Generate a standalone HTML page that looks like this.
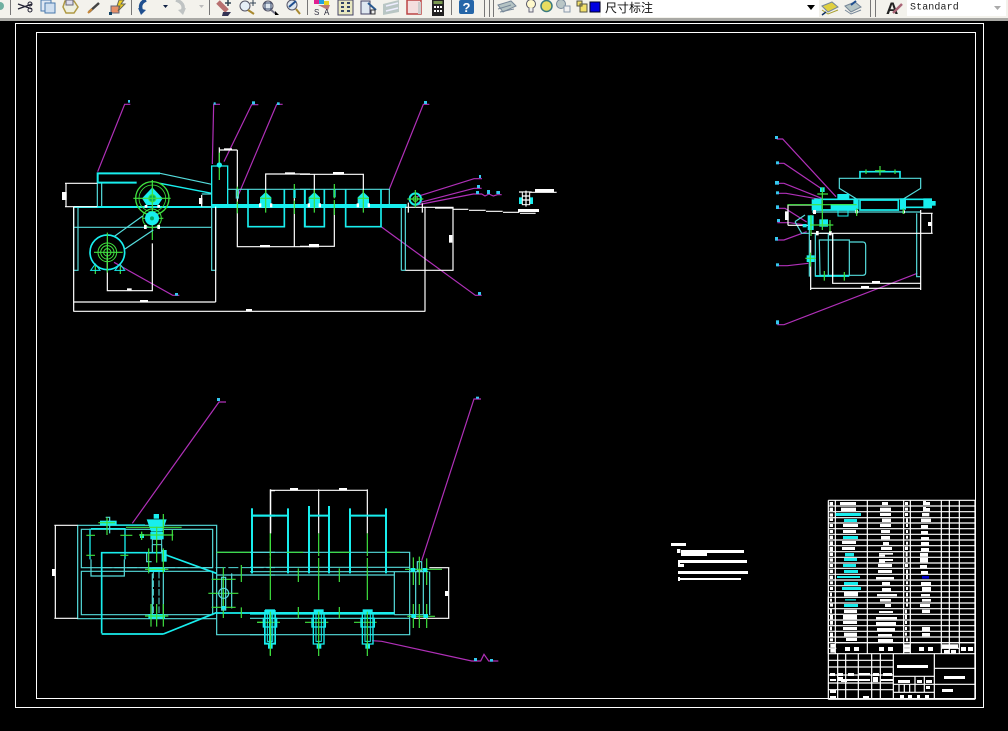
<!DOCTYPE html>
<html><head><meta charset="utf-8"><style>
html,body{margin:0;padding:0;background:#000;width:1008px;height:731px;overflow:hidden}
svg{position:absolute;left:0;top:0}
.c{stroke:#18eeee;stroke-width:6;fill:none}
.d{stroke:#18eeee;stroke-width:9;fill:none}
.t{stroke:#55dcdc;stroke-width:3.600;fill:none}
.g{stroke:#3fe03f;stroke-width:3.600;fill:none}
.w{stroke:#fff;stroke-width:3.600;fill:none}
.m{stroke:#b030b8;stroke-width:3.600;fill:none}
.f{fill:#fff}.k{fill:#18eeee}.b{fill:#35c8f0}
text{font-family:"Liberation Sans","Noto Sans CJK SC",sans-serif}
</style></head><body>
<svg width="1008" height="731" viewBox="0 0 1008 731" xmlns="http://www.w3.org/2000/svg">
<rect width="1008" height="731" fill="#000"/>
<!-- toolbar -->
<rect width="1008" height="19" fill="#f3f2ec"/>
<rect y="18" width="1008" height="3" fill="#a9a9a5"/>
<g stroke="#777" stroke-width="1"><path d="M10.500 0V15M131.500 0V15M209.500 0V15M307.500 0V15M451.500 0V15M484.500 0V17M489.500 0V17M493.500 0V17M870.500 0V17M875.500 0V17"/></g>
<circle cx="0" cy="6" r="4" fill="#6fb0a0"/>
<g fill="none">
<path d="M18 4L32 9M18 9L32 4" stroke="#223" stroke-width="1.200"/><circle cx="30" cy="4" r="2" stroke="#223"/><circle cx="30" cy="10" r="2" stroke="#223"/>
<rect x="41" y="0" width="10" height="11" fill="#dfe8f4" stroke="#4a79ad"/><rect x="45" y="3" width="10" height="10" fill="#cfdff0" stroke="#4a79ad"/>
<path d="M65 1H74L78 7L74 13H66L63 7Z" fill="#eef0e0" stroke="#b09a45" stroke-width="1.500"/><rect x="66" y="0" width="7" height="5" fill="#dde" stroke="#667"/>
<path d="M89 12L99 3" stroke="#444" stroke-width="2.500"/><path d="M88 13L92 9" stroke="#c98a3a" stroke-width="2"/>
<rect x="111" y="6" width="8" height="7" fill="#e89068" stroke="#667"/><path d="M119 0L124 0L121 4H125L118 11L120 6H117Z" fill="#f0d020" stroke="#665"/><rect x="109" y="12" width="3" height="3" fill="#146"/>
<path d="M146 0C141 2 139 6 142 12" stroke="#1f4f8f" stroke-width="3.500"/><path d="M138 8L146 10L141 15Z" fill="#1f4f8f"/>
<path d="M163 5H168L165.500 8Z" fill="#124"/>
<path d="M176 0C182 2 185 6 182 12" stroke="#bfc3c3" stroke-width="3.500"/><path d="M186 8L178 10L183 15Z" fill="#bfc3c3"/>
<path d="M199 5H204L201.500 8Z" fill="#bbb"/>
<path d="M218 2L227 11" stroke="#b87070" stroke-width="5"/><path d="M223 12L231 12L228 16H222Z" fill="#335"/><path d="M228 0L228 6M225 3H231" stroke="#345" stroke-width="1.500"/>
<circle cx="245" cy="6" r="5" fill="#e6eef6" stroke="#556"/><path d="M248 10L254 14" stroke="#a98a30" stroke-width="2"/><path d="M250 3H256M253 0V6" stroke="#345"/>
<circle cx="268" cy="6" r="5" fill="#dde6ee" stroke="#556"/><rect x="265" y="3" width="6" height="6" stroke="#346"/><path d="M271 10L276 14" stroke="#778" stroke-width="2"/><path d="M275 11V15H279Z" fill="#000"/>
<circle cx="292" cy="5" r="5" fill="#dde6ee" stroke="#556"/><path d="M296 9L300 14" stroke="#a98a30" stroke-width="2"/><path d="M289 7L296 1" stroke="#1f4f8f" stroke-width="2"/>
</g>
<g>
<rect x="314" y="0" width="5" height="4" fill="#e02090"/><rect x="319" y="0" width="5" height="4" fill="#20a0e0"/><rect x="324" y="1" width="5" height="4" fill="#e8d020"/>
<path d="M318 5L330 5L328 10Z" fill="#b77"/><text x="314" y="15" font-size="8" fill="#334">S</text><text x="324" y="15" font-size="8" fill="#223">A</text>
<rect x="338" y="0" width="15" height="15" fill="#e8e8c0" stroke="#446"/><g fill="#346"><rect x="341" y="2" width="3" height="2"/><rect x="347" y="2" width="3" height="2"/><rect x="341" y="6" width="3" height="2"/><rect x="347" y="6" width="3" height="2"/><rect x="341" y="10" width="3" height="2"/><rect x="347" y="10" width="3" height="2"/></g>
<rect x="361" y="1" width="9" height="13" fill="#dfe8f0" stroke="#446"/><path d="M368 3L376 10" stroke="#2a5a90" stroke-width="2"/><rect x="371" y="10" width="4" height="4" fill="#eee" stroke="#333"/>
<path d="M383 4L399 0V12L383 15Z" fill="#b9c6c4"/><path d="M386 6L398 3M386 11L398 8" stroke="#eef" stroke-width="1.500"/>
<rect x="407" y="0" width="14" height="14" fill="#f4dede" stroke="#b44" stroke-width="1.500"/><rect x="418" y="2" width="3" height="12" fill="#ccc"/>
<rect x="432" y="0" width="12" height="16" fill="#222"/><rect x="433.500" y="1" width="9" height="3" fill="#7a9a50"/><g fill="#fff"><rect x="434" y="6" width="2" height="2"/><rect x="437" y="6" width="2" height="2"/><rect x="440" y="6" width="2" height="2"/><rect x="434" y="10" width="2" height="2"/><rect x="437" y="10" width="2" height="2"/><rect x="440" y="10" width="2" height="2"/></g>
<rect x="459" y="0" width="15" height="14" rx="2" fill="#2566a8"/><text x="462.500" y="12" font-size="13" font-weight="bold" fill="#fff">?</text>
</g>
<path d="M498 5L511 1L516 6L503 12Z" fill="#b5c4c4" stroke="#789"/><path d="M498 9L511 5M500 12L514 9" stroke="#789"/>
<circle cx="531" cy="4" r="4.500" fill="#fff9cc" stroke="#556"/><path d="M529 8V12H533V8" fill="#eee" stroke="#667"/>
<circle cx="546.500" cy="6" r="5.500" fill="#e8dc60" stroke="#3a7a80" stroke-width="1.500"/>
<circle cx="561" cy="4" r="4.500" fill="#b9c6c6" stroke="#789"/><rect x="564" y="6" width="6" height="6" fill="#f0f0f0" stroke="#89a"/>
<path d="M577 1h5v5h-5zM580 4h7v8h-7z" fill="#f2e06a" stroke="#554"/>
<rect x="590" y="2" width="10" height="10" fill="#0000e0" stroke="#002"/>
<rect x="601" y="0" width="218" height="17" fill="#fff"/>
<text x="605" y="12" font-size="12" fill="#111">尺寸标注</text>
<path d="M807 5H815L811 10Z" fill="#000"/>
<path d="M822 6L832 2L838 7L828 12Z" fill="#e0d040" stroke="#789"/><path d="M822 10L828 14L838 10" fill="none" stroke="#a9a030"/><path d="M822 15L826 12" stroke="#136" stroke-width="1.500"/>
<path d="M845 6L855 2L861 7L851 12Z" fill="#b5c4c4" stroke="#789"/><path d="M845 10L851 14L861 10" fill="none" stroke="#789"/><path d="M851 5L856 1" stroke="#1f4f8f" stroke-width="2"/>
<text x="886" y="14" font-size="17" font-weight="bold" fill="#222">A</text><path d="M893 13L902 4" stroke="#a67" stroke-width="2.500"/>
<rect x="907" y="0" width="99" height="16" fill="#fff"/>
<text x="910" y="9.500" font-size="10" letter-spacing=".1" style='font-family:"Liberation Mono",monospace' fill="#222">Standard</text>
<path d="M994 6H1001L997.500 10Z" fill="#aaa"/>
<!-- drawing frames -->
<rect x="15.500" y="23.500" width="968" height="684" class="w" style="stroke-width:1"/>
<rect x="36.500" y="32.500" width="939" height="666" class="w" style="stroke-width:1"/>

<!-- view A -->
<g transform="translate(50,90) scale(.33333)">
<path class="m" d="M241 43H224L143 245M510 43H491L487 222M625 44H605L522 215M698 43H680L563 320M388 616H368L192 517"/>
<rect x="234" y="30" width="6" height="8" class="b"/><rect x="491" y="37" width="6" height="7" class="b"/><rect x="606" y="34" width="9" height="9" class="b"/><rect x="681" y="37" width="8" height="8" class="b"/><rect x="375" y="609" width="9" height="8" class="b"/>
<path class="t" d="M71 350V541H84V350M485 350V541H497V350M71 412H485M142 280V350M155 280V350"/>
<path class="c" d="M143 280V250H330M143 278H260"/>
<path class="t" d="M330 250L485 283"/>
<path class="c" d="M330 280L485 310" style="stroke-width:4"/>
<path class="d" style="stroke-width:6" d="M71 351H485"/>
<path class="d" style="stroke-width:12" d="M485 348H780"/>
<path class="c" d="M485 348V228H533V345" style="stroke-width:4"/>
<path class="t" d="M533 298H780M455 312H485M455 350H485"/>
<path class="w" d="M45 280H142M45 350H142M48 280V350M71 350V665M71 636H497M71 664H780M497 350V636M172 487V602H307V460M508 172V228M508 180H562M562 180V470H780M733 300V470M647 310V252H780M455 315V350"/>
<rect x="36" y="306" width="14" height="24" class="f"/><rect x="231" y="595" width="14" height="6" class="f"/><rect x="270" y="630" width="24" height="7" class="f"/><rect x="588" y="657" width="18" height="7" class="f"/><rect x="522" y="175" width="24" height="6" class="f"/><rect x="630" y="465" width="30" height="7" class="f"/><rect x="705" y="247" width="30" height="6" class="f"/><rect x="447" y="324" width="10" height="18" class="f"/>
<path class="g" d="M508 188V270M562 290V320M562 335V370M733 282V325M733 332V372"/>
<path class="c" d="M594 298V410H703V298" style="stroke-width:5"/><path class="c" d="M765 298V410H780" style="stroke-width:5"/>
<circle cx="508" cy="225" r="8" class="k"/><rect x="730" y="300" width="7" height="24" class="k"/><rect x="559" y="300" width="6" height="24" class="t"/>
<path class="k" d="M647 306L664 322V345H630V322Z"/><rect x="627" y="340" width="40" height="12" class="f"/><rect x="634" y="338" width="26" height="14" class="k"/><path class="g" d="M647 300V368M630 325H664" />
<circle cx="307" cy="325" r="50" class="g" style="stroke-width:4"/><circle cx="307" cy="325" r="40" class="g" style="stroke-width:2.500"/>
<path class="k" d="M307 292L338 325L325 345H289L276 325Z"/><circle cx="307" cy="325" r="11" fill="#0a6" stroke="#3fe03f" stroke-width="3"/>
<path class="g" d="M307 270V450M250 325H362M278 385H340"/>
<circle cx="306" cy="385" r="28" class="g" style="stroke-width:3"/><circle cx="306" cy="385" r="21" class="k"/><circle cx="306" cy="385" r="6" fill="#0a6" />
<rect x="282" y="405" width="8" height="12" class="f"/><rect x="322" y="405" width="8" height="12" class="f"/><rect x="284" y="345" width="8" height="8" class="f"/><rect x="322" y="345" width="8" height="8" class="f"/>
<path class="t" d="M192 440L278 378M225 477L310 420"/>
<circle cx="172" cy="487" r="52" class="c" style="stroke-width:5"/><circle cx="172" cy="487" r="28" class="g" style="stroke-width:3"/><circle cx="172" cy="487" r="20" class="g" style="stroke-width:3"/><circle cx="172" cy="487" r="11" class="g" style="stroke-width:3"/>
<path class="g" d="M172 428V548M132 487H218M136 528V552M211 528V552"/>
<path class="c" d="M122 541H150L136 522ZM195 541H224L210 522Z" style="stroke-width:3"/>
</g>

<!-- view B -->
<g transform="translate(300,90) scale(.33333)">
<path class="m" d="M388 43H370L268 297M546 266H522L350 320M545 295H522L350 340M605 314H592L580 318L567 312L555 318L545 312H520L350 345M545 616H526L243 410"/>
<rect x="372" y="33" width="9" height="9" class="b"/><rect x="537" y="255" width="6" height="9" class="b"/><rect x="531" y="285" width="9" height="9" class="b"/><rect x="528" y="303" width="9" height="9" class="b"/><rect x="561" y="300" width="9" height="12" class="b"/><rect x="589" y="303" width="11" height="9" class="b"/><rect x="534" y="606" width="9" height="9" class="b"/>
<path class="t" d="M0 298H268V345M304 350V541M316 350V541M304 541H316"/>
<path class="d" style="stroke-width:12" d="M0 348H320"/>
<path class="c" d="M14 298V410H73V298M137 298V410H243V298" style="stroke-width:5"/>
<path class="w" d="M0 253H190V310M43 252V310M0 469H103V355M316 541H459V352H316M375 350V665M0 664H375M325 338V368M367 340V368M460 358H505M507 361H557M558 364H608M609 367H658M660 370H707M657 306H695M690 307H770"/>
<rect x="99" y="246" width="33" height="7" class="f"/><rect x="27" y="462" width="30" height="10" class="f"/><rect x="405" y="351" width="55" height="5" class="f"/><rect x="447" y="435" width="10" height="23" class="f"/><rect x="705" y="297" width="57" height="9" class="f"/><rect x="654" y="357" width="63" height="9" class="f"/>
<rect x="100" y="298" width="7" height="24" class="k"/><path class="g" d="M103 282V325M103 330V375"/>
<g><path class="k" d="M43 306L60 322V345H26V322Z"/><rect x="23" y="340" width="40" height="12" class="f"/><rect x="30" y="338" width="26" height="14" class="k"/><path class="g" d="M43 300V368M26 325H60"/></g>
<path class="k" d="M190 306L207 322V345H173V322Z"/><rect x="170" y="340" width="40" height="12" class="f"/><rect x="177" y="338" width="26" height="14" class="k"/><path class="g" d="M190 300V368M173 325H207"/>
<circle cx="346" cy="327" r="17" class="c" style="stroke-width:6"/><path class="g" d="M346 300V352M322 327H370"/><circle cx="346" cy="327" r="7" class="g"/>
<rect x="657" y="322" width="42" height="20" class="k"/><rect x="667" y="306" width="22" height="38" fill="#000" stroke="#fff" stroke-width="3"/><path class="w" d="M678 302V350M667 318H689M667 330H689"/>
</g>

<!-- view C -->
<g transform="translate(760,130) scale(.33333)">
<path class="m" d="M50 27H68L228 200M52 100H72L190 180M50 160H72L185 205M52 190H78L180 208M52 235H75L140 276M52 278H90L135 285M50 330H72L140 305M52 407H82L145 400M52 584H72L472 430"/>
<g class="b"><rect x="45" y="18" width="9" height="9"/><rect x="48" y="94" width="9" height="9"/><rect x="45" y="153" width="12" height="11"/><rect x="48" y="184" width="9" height="9"/><rect x="48" y="226" width="9" height="11"/><rect x="51" y="267" width="9" height="9"/><rect x="45" y="321" width="9" height="11"/><rect x="48" y="400" width="9" height="9"/><rect x="48" y="571" width="9" height="12"/></g>
<path class="t" d="M238 145H482V175L430 207H290L238 175ZM156 246H482M148 270V440M166 310V440M218 310V440M178 330H268V436H180ZM268 336H308Q317 336 317 346V428Q317 436 308 436H268M470 250V440H482M105 275L135 255M105 275L125 310H150"/>
<path class="c" d="M300 145V125H420V145" style="stroke-width:5"/>
<path class="c" d="M165 208H290V240H165ZM300 210H415V240H300ZM420 208H500M420 232H500" style="stroke-width:5"/>
<path class="t" d="M180 310H205V438H180"/>
<path class="c" d="M166 438H268" style="stroke-width:5"/>
<path class="w" d="M84 225H165M84 286H150M84 225V286M218 310V460H482M152 310H518M515 250V310M482 250H518M482 240V480M152 330V480M152 475H482"/>
<rect x="75" y="244" width="11" height="26" class="f"/><rect x="504" y="276" width="10" height="12" class="f"/><rect x="336" y="453" width="24" height="7" class="f"/><rect x="303" y="468" width="24" height="6" class="f"/>
<rect x="180" y="172" width="14" height="14" class="k"/><rect x="155" y="208" width="30" height="34" class="k"/><rect x="232" y="192" width="36" height="18" class="k"/><rect x="212" y="222" width="74" height="18" class="k"/><rect x="280" y="208" width="16" height="30" class="k"/>
<rect x="143" y="256" width="18" height="44" class="k"/><rect x="178" y="268" width="26" height="22" class="k"/><rect x="128" y="282" width="12" height="10" class="k"/><rect x="490" y="205" width="26" height="30" class="k"/><rect x="515" y="213" width="12" height="14" class="k"/><rect x="420" y="205" width="18" height="34" class="k"/><rect x="140" y="376" width="24" height="20" class="k"/><rect x="234" y="240" width="30" height="18" fill="none" stroke="#18eeee" stroke-width="3"/>
<rect x="168" y="303" width="8" height="13" class="f"/><rect x="207" y="303" width="8" height="13" class="f"/><rect x="159" y="240" width="9" height="12" class="f"/><rect x="286" y="240" width="8" height="10" class="f"/><rect x="428" y="241" width="7" height="9" class="f"/>
<path class="g" d="M187 172V300M172 192H204M82 224H290M150 285H220M360 108V136M318 118V132M405 118V132M345 122H376M290 235V258M430 235V252M193 423V452M253 426V452M151 368V410M136 385H168M153 255V318M210 270V305"/>
</g>

<!-- view D (leader tops above the crop) -->
<g transform="translate(45,480) scale(.33333)">
<path class="m" d="M543 -234H522L262 130"/>
<rect x="516" y="-246" width="9" height="9" class="b"/>
<path class="t" d="M98 136H515V416H98ZM109 148H503V263H109ZM109 274H503V404H109ZM515 217H690M515 285H690M515 275V464H690M503 285V404M560 280V385"/>
<path class="c" d="M170 460V218H355M170 462H355M355 462L514 398M355 222L514 280M514 399H690" style="stroke-width:5"/>
<path class="c" d="M138 146H240V238M135 146V238M175 135H300" style="stroke-width:4"/>
<path class="t" d="M138 238V288H238V238M182 112H194V160"/>
<path stroke="#55dcdc" stroke-width="3" stroke-dasharray="30 8" d="M170 263H690" fill="none"/><path stroke="#55dcdc" stroke-width="3" stroke-dasharray="20 6" d="M325 275V400M342 275V400" fill="none"/>
<path class="t" d="M322 280V405H355V280M305 220V245H320"/>
<rect x="165" y="122" width="50" height="14" class="k"/><path class="k" d="M305 118H365L352 155H318Z"/><rect x="326" y="102" width="16" height="14" class="k"/><rect x="285" y="162" width="12" height="12" class="k"/><rect x="316" y="156" width="40" height="22" class="k"/><rect x="322" y="178" width="28" height="16" fill="none" stroke="#55dcdc" stroke-width="3"/><rect x="350" y="210" width="15" height="35" class="k"/><path class="t" d="M322 195V218M350 195V218"/>
<rect x="310" y="262" width="50" height="14" class="k"/><rect x="310" y="402" width="50" height="14" class="k"/>
<path class="w" d="M28 136H98M28 415H98M31 136V415"/><rect x="21" y="267" width="10" height="21" class="f"/>
<path class="g" d="M160 128H210M186 112V165M124 166H150M226 166H262M124 226H150M226 226H250M243 142H410M282 165H385M290 155V180M335 140V248M355 102V160M382 150V182M311 205V280M355 205V280M300 268H370M318 372V440M335 372V440M355 372V440M300 408H370M500 298H572M490 340H580M535 262V414M500 382H572M589 255V306M589 382V414M636 427H660M676 160V240M515 217H620M676 490V525"/>
<circle cx="536" cy="340" r="15" class="t"/><path class="t" d="M530 292H542V390H530Z"/><rect x="531" y="378" width="10" height="10" class="k"/>
<path class="c" d="M621 85V280M621 107H690" style="stroke-width:6"/>
<path class="c" d="M660 392H690V490H660Z" style="stroke-width:4"/><rect x="672" y="395" width="8" height="110" class="k"/>
<path class="w" d="M677 28V160M677 32H690"/>
</g>

<!-- view E -->
<g transform="translate(250,480) scale(.33333)">
<path class="m" d="M693 -243H672L515 242M366 482L395 484L665 543H692L702 523L716 543H745"/>
<rect x="678" y="-250" width="9" height="6" class="b"/>
<rect x="672" y="534" width="9" height="9" class="b"/><rect x="720" y="537" width="9" height="8" class="b"/>
<path class="w" d="M61 28V160M61 31H352M206 28V160M352 28V160M538 263H598M490 415H598M596 263V415"/>
<rect x="120" y="24" width="24" height="7" class="f"/><rect x="267" y="24" width="24" height="7" class="f"/><rect x="585" y="333" width="10" height="15" class="f"/>
<path class="t" d="M0 217H479V464H0M0 262H479M0 275H535M0 285H433V404M0 415H479M433 275V404M433 404H530M502 245V272H515V245ZM497 275V405M520 275V405M539 275V405"/>
<path class="c" d="M6 85V280M3 107H114M114 85V280M177 78V280M177 107H237M237 78V280M300 85V280M300 107H408M408 85V280" style="stroke-width:6"/>
<path class="d" style="stroke-width:8" d="M0 400H433"/>
<path class="g" d="M61 160V228M61 234V360M206 160V228M206 234V360M352 160V228M352 234V360M110 217H160M240 217H300M410 217H450M145 265V306M268 265V306M145 381V415M268 381V415M465 268H576M508 230V315M490 232V315M530 235V315M472 409H555M490 372V444M508 372V444M530 372V444M22 427H90M165 427H235M312 427H380"/>
<rect x="482" y="264" width="14" height="12" class="k"/><rect x="518" y="264" width="14" height="12" class="k"/><rect x="484" y="402" width="14" height="12" class="k"/><rect x="520" y="402" width="14" height="12" class="k"/>
<g><rect x="45" y="388" width="30" height="14" class="k"/><path class="c" d="M44 402V492H76V402" style="stroke-width:4"/><path class="c" d="M52 402V484H68V402" style="stroke-width:3"/><rect x="40" y="415" width="40" height="26" fill="none" stroke="#18eeee" stroke-width="4"/><rect x="54" y="492" width="14" height="14" class="k"/></g>
<rect x="191" y="388" width="30" height="14" class="k"/><path class="c" d="M190 402V492H222V402" style="stroke-width:4"/><path class="c" d="M198 402V484H214V402" style="stroke-width:3"/><rect x="186" y="415" width="40" height="26" fill="none" stroke="#18eeee" stroke-width="4"/><rect x="200" y="492" width="14" height="14" class="k"/>
<rect x="338" y="388" width="30" height="14" class="k"/><path class="c" d="M337 402V492H369V402" style="stroke-width:4"/><path class="c" d="M345 402V484H361V402" style="stroke-width:3"/><rect x="333" y="415" width="40" height="26" fill="none" stroke="#18eeee" stroke-width="4"/><rect x="346" y="492" width="14" height="14" class="k"/>
<path class="g" d="M61 395V528M206 395V528M352 395V528"/>
</g>

<!-- notes -->
<g transform="translate(660,535) scale(.33333)" class="f">
<rect x="33" y="24" width="45" height="9"/><rect x="51" y="42" width="10" height="12"/><rect x="63" y="45" width="189" height="9"/><rect x="63" y="54" width="78" height="9"/><rect x="54" y="75" width="207" height="9"/><rect x="54" y="84" width="6" height="12"/><rect x="60" y="87" width="12" height="9"/><rect x="54" y="108" width="210" height="9"/><rect x="54" y="126" width="6" height="12"/><rect x="60" y="129" width="183" height="6"/>
</g>

<!-- parts table -->
<g transform="translate(825,495) scale(.33333)">
<path class="w" d="M10 16H450M10 33H450M10 50H450M10 68H450M10 84H450M10 101H450M10 118H450M10 135H450M10 152H450M10 170H450M10 187H450M10 204H450M10 220H450M10 238H450M10 255H450M10 272H450M10 290H450M10 307H450M10 324H450M10 341H450M10 358H450M10 375H450M10 392H450M10 409H450M10 426H450M10 443H450"/>
<path class="w" d="M10 16V476M31 16V476M127 16V476M236 16V476M256 16V476M349 16V476M373 16V476M403 16V476M450 16V613"/>
<g fill="#fff">
<rect x="45" y="21" width="48" height="9"/><rect x="171" y="21" width="18" height="9"/><rect x="294" y="18" width="9" height="12"/><rect x="303" y="21" width="12" height="9"/>
<rect x="48" y="38" width="45" height="10"/><rect x="165" y="38" width="33" height="10"/><rect x="294" y="36" width="9" height="12"/><rect x="303" y="39" width="12" height="9"/>
<rect x="165" y="54" width="33" height="9"/><rect x="291" y="54" width="22" height="10"/>
<rect x="171" y="71" width="27" height="10"/><rect x="288" y="71" width="30" height="10"/>
<rect x="54" y="87" width="45" height="9"/><rect x="165" y="87" width="33" height="9"/><rect x="288" y="90" width="21" height="10"/>
<rect x="54" y="105" width="39" height="9"/><rect x="168" y="105" width="27" height="9"/><rect x="288" y="108" width="21" height="10"/>
<rect x="168" y="123" width="27" height="10"/><rect x="288" y="126" width="24" height="8"/>
<rect x="51" y="138" width="42" height="9"/><rect x="174" y="141" width="18" height="9"/><rect x="288" y="141" width="24" height="10"/>
<rect x="51" y="156" width="39" height="9"/><rect x="168" y="156" width="33" height="9"/><rect x="288" y="159" width="24" height="10"/>
<rect x="162" y="174" width="42" height="5"/><rect x="162" y="179" width="18" height="6"/><rect x="285" y="174" width="24" height="11"/>
<rect x="162" y="192" width="42" height="6"/><rect x="162" y="198" width="18" height="5"/><rect x="285" y="189" width="24" height="13"/>
<rect x="159" y="207" width="42" height="9"/><rect x="285" y="210" width="21" height="10"/>
<rect x="159" y="225" width="42" height="9"/><rect x="288" y="228" width="21" height="9"/>
<rect x="153" y="246" width="54" height="7"/>
<rect x="171" y="261" width="24" height="9"/><rect x="288" y="261" width="30" height="11"/>
<rect x="171" y="279" width="27" height="10"/><rect x="291" y="276" width="27" height="13"/>
<rect x="57" y="291" width="42" height="13"/><rect x="156" y="297" width="60" height="7"/><rect x="288" y="297" width="27" height="7"/>
<rect x="165" y="312" width="33" height="8"/><rect x="291" y="312" width="27" height="8"/>
<rect x="180" y="327" width="18" height="9"/><rect x="285" y="327" width="30" height="9"/>
<rect x="57" y="344" width="39" height="10"/><rect x="162" y="348" width="42" height="6"/><rect x="291" y="344" width="24" height="10"/>
<rect x="54" y="360" width="42" height="13"/><rect x="153" y="366" width="63" height="7"/>
<rect x="54" y="378" width="42" height="9"/><rect x="153" y="381" width="60" height="10"/>
<rect x="54" y="396" width="42" height="9"/><rect x="156" y="399" width="54" height="9"/><rect x="291" y="396" width="24" height="12"/>
<rect x="57" y="413" width="39" height="11"/><rect x="159" y="417" width="42" height="7"/><rect x="291" y="414" width="24" height="10"/>
<rect x="63" y="429" width="33" height="9"/><rect x="159" y="432" width="45" height="9"/>
</g>
<g fill="#18eeee">
<rect x="32" y="54" width="76" height="9"/><rect x="57" y="72" width="39" height="9"/><rect x="54" y="123" width="45" height="9"/><rect x="60" y="174" width="27" height="10"/><rect x="57" y="189" width="39" height="9"/><rect x="54" y="207" width="39" height="9"/><rect x="57" y="225" width="42" height="9"/><rect x="36" y="243" width="69" height="6"/><rect x="57" y="261" width="42" height="9"/><rect x="51" y="276" width="57" height="9"/><rect x="60" y="312" width="33" height="5" opacity=".8"/><rect x="57" y="327" width="42" height="9"/>
</g>
<rect x="291" y="243" width="21" height="8" fill="#0000d0"/>
<g fill="#fff">
<rect x="14" y="21" width="10" height="10"/><rect x="240" y="21" width="9" height="9"/><rect x="14" y="38" width="10" height="10"/><rect x="240" y="38" width="9" height="9"/><rect x="14" y="55" width="10" height="10"/><rect x="240" y="54" width="9" height="9"/><rect x="14" y="70" width="10" height="8"/><rect x="243" y="70" width="6" height="12"/><rect x="14" y="87" width="10" height="9"/><rect x="243" y="87" width="6" height="9"/><rect x="14" y="105" width="10" height="9"/><rect x="243" y="105" width="6" height="9"/><rect x="14" y="122" width="10" height="10"/><rect x="243" y="122" width="6" height="9"/><rect x="14" y="139" width="10" height="11"/><rect x="243" y="140" width="6" height="9"/><rect x="14" y="156" width="10" height="12"/><rect x="240" y="155" width="9" height="10"/><rect x="14" y="173" width="10" height="10"/><rect x="242" y="171" width="6" height="13"/><rect x="14" y="190" width="10" height="10"/><rect x="242" y="189" width="6" height="12"/><rect x="14" y="207" width="10" height="9"/><rect x="240" y="207" width="9" height="9"/><rect x="14" y="224" width="10" height="10"/><rect x="243" y="224" width="6" height="12"/><rect x="14" y="242" width="10" height="10"/><rect x="243" y="240" width="6" height="12"/><rect x="15" y="259" width="9" height="9"/><rect x="243" y="259" width="6" height="9"/><rect x="15" y="276" width="9" height="9"/><rect x="243" y="276" width="6" height="9"/><rect x="15" y="293" width="6" height="11"/><rect x="243" y="293" width="6" height="11"/><rect x="15" y="311" width="6" height="9"/><rect x="243" y="311" width="6" height="9"/><rect x="15" y="326" width="9" height="9"/><rect x="243" y="326" width="6" height="9"/><rect x="15" y="342" width="6" height="13"/><rect x="240" y="344" width="6" height="11"/><rect x="15" y="360" width="9" height="13"/><rect x="240" y="360" width="6" height="12"/><rect x="15" y="378" width="9" height="11"/><rect x="240" y="378" width="6" height="9"/><rect x="15" y="395" width="6" height="11"/><rect x="240" y="396" width="6" height="9"/><rect x="15" y="413" width="9" height="12"/><rect x="240" y="413" width="6" height="9"/><rect x="15" y="430" width="9" height="9"/><rect x="243" y="430" width="6" height="9"/>
</g>
</g>

<!-- title block -->
<g transform="translate(825,595) scale(.33333)">
<path class="w" d="M10 143H450M10 176H450M10 160H34M236 160H256M349 160H403M10 313H450M10 5V313M450 5V313"/>
<path class="w" d="M38 176V313M62 176V313M100 176V313M140 176V313M166 176V313M205 176V313M328 176V313M10 196H205M10 216H205M10 240H205M10 264H205M10 284H205M205 244H328M205 268H450M205 292H328M329 220H450M222 268V292M238 268V292M254 268V292M270 244V292M298 244V292"/>
<g fill="#fff"><rect x="60" y="156" width="15" height="12"/><rect x="87" y="156" width="15" height="12"/><rect x="162" y="156" width="15" height="12"/><rect x="189" y="156" width="15" height="12"/><rect x="282" y="156" width="15" height="12"/><rect x="309" y="156" width="15" height="12"/><rect x="351" y="148" width="48" height="12"/><rect x="357" y="165" width="15" height="10"/><rect x="378" y="165" width="15" height="10"/><rect x="408" y="156" width="15" height="12"/><rect x="429" y="156" width="15" height="12"/><rect x="16" y="147" width="14" height="11"/><rect x="16" y="162" width="14" height="11"/><rect x="237" y="148" width="18" height="10"/><rect x="237" y="162" width="18" height="10"/>
<rect x="216" y="210" width="93" height="9"/><rect x="357" y="243" width="63" height="9"/><rect x="351" y="282" width="33" height="9"/><rect x="219" y="255" width="36" height="9"/><rect x="276" y="255" width="15" height="9"/><rect x="303" y="255" width="18" height="9"/><rect x="303" y="273" width="12" height="9"/><rect x="225" y="300" width="12" height="9"/><rect x="249" y="300" width="12" height="9"/><rect x="276" y="300" width="9" height="9"/><rect x="300" y="300" width="12" height="9"/>
<rect x="15" y="234" width="15" height="9"/><rect x="39" y="234" width="15" height="9"/><rect x="69" y="234" width="18" height="9"/><rect x="102" y="234" width="33" height="6"/><rect x="144" y="234" width="18" height="9"/><rect x="174" y="234" width="27" height="9"/><rect x="15" y="252" width="18" height="6"/><rect x="39" y="246" width="15" height="12"/><rect x="48" y="252" width="18" height="9"/><rect x="66" y="252" width="69" height="6"/><rect x="144" y="246" width="15" height="15"/><rect x="168" y="252" width="36" height="6"/><rect x="15" y="285" width="18" height="9"/><rect x="15" y="303" width="18" height="9"/><rect x="114" y="303" width="18" height="9"/></g>
</g>
</svg>
</body></html>
